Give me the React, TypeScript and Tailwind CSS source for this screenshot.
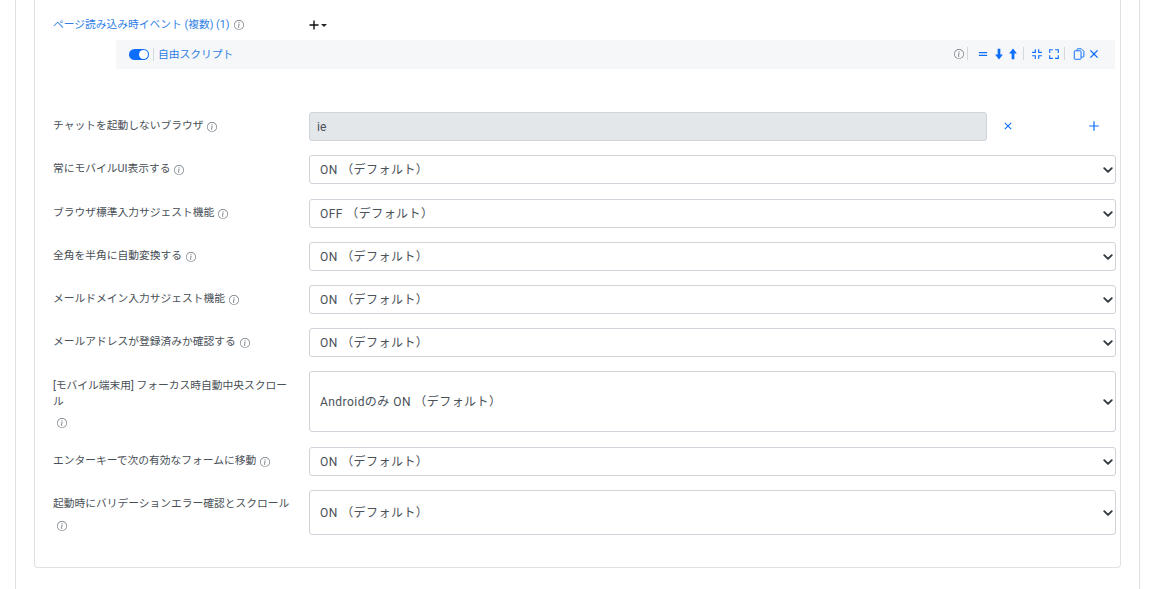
import React from "react";

const Info = ({ className = "" }: { className?: string }) => (
  <svg viewBox="0 0 16 16" className={`inline-block w-[10px] h-[10px] text-[#6c757d] ${className}`} fill="currentColor">
    <path d="M8 15A7 7 0 1 1 8 1a7 7 0 0 1 0 14zm0 1A8 8 0 1 0 8 0a8 8 0 0 0 0 16z" />
    <path d="M8.930 6.590l-2.290.280-.080.380.450.080c.290.070.350.180.290.470l-.740 3.470c-.200.900.100 1.320.800 1.320.550 0 1.180-.250 1.470-.600l.090-.420c-.200.180-.500.250-.700.250-.270 0-.370-.200-.300-.540L8.930 6.590zM9 4.500a1 1 0 1 1-2 0 1 1 0 0 1 2 0z" />
  </svg>
);

const Chevron = () => (
  <svg viewBox="0 0 16 16" className="absolute right-[3px] top-1/2 -translate-y-1/2 w-[10px] h-[10px] pointer-events-none" fill="none" stroke="#343a40" strokeWidth="3" strokeLinecap="round" strokeLinejoin="round">
    <path d="M2 5l6 6 6-6" />
  </svg>
);

const Sel = ({ value, h }: { value: string; h: string }) => (
  <div className={`relative flex-1 ${h}`}>
    <select defaultValue={value} className="appearance-none w-full h-full bg-white border border-[#ced4da] rounded-[3px] pl-[10px] pr-6 text-[12px] tracking-[0.45px] text-[#495057] outline-none">
      <option>{value}</option>
    </select>
    <Chevron />
  </div>
);

const Row = ({ label, value, h, mt }: { label: React.ReactNode; value: string; h: string; mt: string }) => (
  <div className={`flex ${mt}`}>
    <div className="w-[256px] shrink-0 pr-4 self-start">{label}</div>
    <Sel value={value} h={h} />
  </div>
);

const Inline = ({ text }: { text: string }) => (
  <div className="pt-[6px] flex gap-[4px] items-start">
    <span>{text}</span>
    <Info className="mt-[4px]" />
  </div>
);

const Wrapped = ({ text, top, gap }: { text: string; top: string; gap: string }) => (
  <div className={`${top} leading-[16px]`}>
    <div>{text}</div>
    <div className={`${gap} pl-[4px] leading-none`}><Info /></div>
  </div>
);

const blue = "text-[#0d6efd]";

const Tool = ({ children, className = "" }: { children: React.ReactNode; className?: string }) => (
  <svg viewBox="0 0 16 16" className={`w-[12px] h-[12px] ${blue} ${className}`} fill="currentColor">{children}</svg>
);

const Sep = () => <span className="block w-px h-[13px] bg-[#d5d8dc]" />;

export default function App() {
  return (
    <div className="h-[589px] overflow-hidden bg-white font-['Roboto','Noto_Sans_CJK_JP',sans-serif] text-[10.75px] text-[#495057]">
      <div className="ml-[15px] mr-[10px] h-[589px] border-x border-[#dee2e6] px-[18px]">
        <div className="h-[568px] border border-t-0 border-[#dee2e6] rounded-b-[4px] pl-[18px] pr-[4px] pt-[16px]">
          <div className="flex items-center h-[18px]">
            <div className="w-[256px] text-[#2f7fe6] flex items-center gap-[4px] whitespace-nowrap">
              <span className="mt-[1px]">ページ読み込み時イベント (複数) (1)</span>
              <Info />
            </div>
            <svg viewBox="0 0 10 10" className="w-[10px] h-[10px] text-[#111]" fill="currentColor"><path d="M4.300 .5h1.400v3.800h3.800v1.400H5.700v3.800H4.300V5.700H.5V4.300h3.800z" /></svg>
            <span className="ml-[2px] w-0 h-0 border-x-[3px] border-x-transparent border-t-[3px] border-t-[#212529]" />
          </div>
          <div className="ml-[63px] mr-[1px] mt-[6px] h-[29px] bg-[#f6f7f9] flex items-center pl-[13px] pr-[15px]">
            <span className="relative w-[20px] h-[11px] rounded-full bg-[#0d6efd]">
              <span className="absolute right-[1px] top-[1px] w-[9px] h-[9px] rounded-full bg-white" />
            </span>
            <span className="ml-[4px] mr-[4px] w-px h-[13px] bg-[#d5d8dc]" />
            <span className="text-[#2f7fe6] mt-[1px]">自由スクリプト</span>
            <div className="ml-auto flex items-center mb-[2px]">
              <Info />
              <span className="ml-[3px]"><Sep /></span>
              <Tool className="ml-[9px]"><path d="M2.500 5.200h11v1.900h-11zM2.500 8.900h11v1.900h-11z" /></Tool>
              <Tool className="ml-[4px]"><path d="M6.200 1h3.600v7.800h3.400L8 15.200 2.800 8.800h3.400z" /></Tool>
              <Tool className="ml-[2px]"><path d="M6.200 15h3.600V7.200h3.400L8 .8 2.800 7.200h3.400z" /></Tool>
              <span className="ml-[4px]"><Sep /></span>
              <Tool className="ml-[7px]"><path d="M5 1.500h1.500V6.500H1.500V5H5zM9.500 1.500H11V5h3.500v1.500h-5zM1.500 9.500h5v5H5V11H1.500zM9.500 9.500h5V11H11v3.500H9.500z" /></Tool>
              <Tool className="ml-[5px]"><path d="M1.500 1.500h5V3H3v3.500H1.500zM9.500 1.500h5v5H13V3H9.500zM1.500 9.500H3V13h3.500v1.500h-5zM13 9.500h1.500v5h-5V13H13z" /></Tool>
              <span className="ml-[4px]"><Sep /></span>
              <svg viewBox="0 0 16 16" className={`ml-[8px] w-[12px] h-[12px] ${blue}`} fill="none" stroke="currentColor" strokeWidth="1.300">
                <path d="M5.500 3.500V1.700a.7.7 0 0 1 .7-.7H11l3.500 3.500v6.800a.7.7 0 0 1-.7.7H11" />
                <rect x="1.700" y="3.700" width="9" height="11.300" rx="1" />
              </svg>
              <Tool className="ml-[3px]"><path d="M3.800 2.600L8 6.800l4.200-4.200 1.200 1.200L9.200 8l4.200 4.200-1.200 1.200L8 9.200l-4.200 4.200-1.200-1.200L6.800 8 2.600 3.800z" /></Tool>
            </div>
          </div>

          <div className="flex mt-[43px]">
            <div className="w-[256px] shrink-0"><Inline text="チャットを起動しないブラウザ" /></div>
            <div className="w-[678px] h-[29px] flex items-center bg-[#e4e7ea] border border-[#ced4da] rounded-[3px] pl-[7px] text-[12px]">ie</div>
            <svg viewBox="0 0 16 16" className={`ml-[15px] mt-[8px] w-[12px] h-[12px] ${blue}`} fill="currentColor"><path d="M4.300 3.200L8 6.900l3.700-3.700 1.100 1.100L9.100 8l3.700 3.700-1.100 1.100L8 9.100l-3.700 3.700-1.100-1.100L6.900 8 3.200 4.300z" /></svg>
            <svg viewBox="0 0 16 16" className={`ml-[73px] mt-[7px] w-[14px] h-[14px] ${blue}`} fill="currentColor"><path d="M7.300 2.500h1.400v4.800h4.800v1.400H8.700v4.800H7.300V8.700H2.500V7.300h4.800z" /></svg>
          </div>

          <Row mt="mt-[14px]" h="h-[29px]" value="ON （デフォルト）" label={<Inline text="常にモバイルUI表示する" />} />
          <Row mt="mt-[15px]" h="h-[29px]" value="OFF （デフォルト）" label={<Inline text="ブラウザ標準入力サジェスト機能" />} />
          <Row mt="mt-[14px]" h="h-[29px]" value="ON （デフォルト）" label={<Inline text="全角を半角に自動変換する" />} />
          <Row mt="mt-[14px]" h="h-[29px]" value="ON （デフォルト）" label={<Inline text="メールドメイン入力サジェスト機能" />} />
          <Row mt="mt-[14px]" h="h-[29px]" value="ON （デフォルト）" label={<Inline text="メールアドレスが登録済みか確認する" />} />
          <Row mt="mt-[14px]" h="h-[61px]" value="Androidのみ ON （デフォルト）" label={<Wrapped top="pt-[7px]" gap="mt-[8px]" text="[モバイル端末用] フォーカス時自動中央スクロール" />} />
          <Row mt="mt-[15px]" h="h-[29px]" value="ON （デフォルト）" label={<Inline text="エンターキーで次の有効なフォームに移動" />} />
          <Row mt="mt-[14px]" h="h-[45px]" value="ON （デフォルト）" label={<Wrapped top="pt-[6px]" gap="mt-[9px]" text="起動時にバリデーションエラー確認とスクロール" />} />
        </div>
      </div>
    </div>
  );
}
